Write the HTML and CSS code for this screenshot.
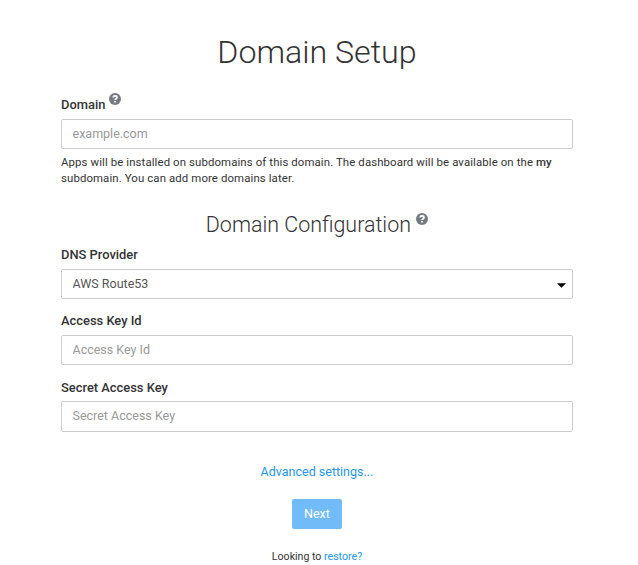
FILE: index.html
```html
<!DOCTYPE html>
<html lang="en">
<head>
<meta charset="utf-8">
<title>Domain Setup</title>
<link rel="stylesheet" href="styles.css">
</head>
<body>
<main class="setup">
  <h1>Domain Setup</h1>
  <form>
    <div class="group">
      <label for="domain">Domain <sup><svg class="help" viewBox="0 0 12 12"><circle cx="6" cy="6" r="6"/><path d="M4.1 4.5C4.2 3.3 5 2.8 6 2.8s2 .6 2 1.6C8 5.7 6.1 5.7 6.1 7.1"/><rect x="5.2" y="8" width="1.7" height="1.6"/></svg></sup></label>
      <input id="domain" type="text" placeholder="example.com">
      <p class="hint">Apps will be installed on subdomains of this domain. The dashboard will be available on the <b>my</b> subdomain. You can add more domains later.</p>
    </div>
    <h2>Domain Configuration <sup><svg class="help" viewBox="0 0 12 12"><circle cx="6" cy="6" r="6"/><path d="M4.1 4.5C4.2 3.3 5 2.8 6 2.8s2 .6 2 1.6C8 5.7 6.1 5.7 6.1 7.1"/><rect x="5.2" y="8" width="1.7" height="1.6"/></svg></sup></h2>
    <div class="group">
      <label for="provider">DNS Provider</label>
      <div class="select"><select id="provider"><option>AWS Route53</option></select><svg class="caret" viewBox="0 0 10 5"><path d="M0 0h10L5 5z"/></svg></div>
    </div>
    <div class="group">
      <label for="key">Access Key Id</label>
      <input id="key" type="text" placeholder="Access Key Id">
    </div>
    <div class="group last">
      <label for="secret">Secret Access Key</label>
      <input id="secret" type="text" placeholder="Secret Access Key">
    </div>
    <div class="actions">
      <a class="advanced" href="#">Advanced settings...</a>
      <button type="button">Next</button>
      <p class="restore">Looking to <a href="#">restore?</a></p>
    </div>
  </form>
</main>
</body>
</html>
```

FILE: styles.css
```css
* { box-sizing: border-box; }
body { margin: 0; background: #fff; color: #333; font: 12.5px/20px Roboto, "Liberation Sans", sans-serif; overflow: hidden; }
.setup { width: 512px; margin: 0 0 0 61px; padding-top: 34px; }
h1 { margin: 0 0 25px; font-size: 32.2px; line-height: 36px; font-weight: 300; text-align: center; }
h2 { margin: 27px 0 8px; font-size: 21.45px; line-height: 24px; font-weight: 300; text-align: center; }
label { display: block; height: 20px; margin-bottom: 4px; font-size: 12.9px; font-weight: 500; }
sup { font-size: 75%; line-height: 0; position: relative; top: -0.5em; vertical-align: baseline; }
.help { width: 12px; height: 12px; fill: #757b80; position: relative; top: 1px; }
.help path { fill: none; stroke: #fff; stroke-width: 1.7; }
.help rect { fill: #fff; }
input, select { display: block; width: 100%; height: 30px; padding: 3px 11px 5px 10.5px; border: 1px solid #ccc; border-radius: 2px; background: #fff; color: #555; font: inherit; outline: 0; appearance: none; }
select { padding-top: 4px; padding-bottom: 4px; }
input::placeholder { color: #999; opacity: 1; }
.hint { margin: 5px 0 0; font-size: 11.4px; letter-spacing: .11px; line-height: 16px; }
.hint b { font-weight: 500; }
.group + .group { margin-top: 12px; }
.group.last label { position: relative; top: 1px; }
.group.last input { height: 31px; }
.select { position: relative; }
.caret { position: absolute; right: 7px; top: 14px; width: 9px; height: 5px; fill: #000; }
.actions { display: flex; flex-direction: column; align-items: center; margin-top: 30px; }
a { color: #2196f3; text-decoration: none; }
button { margin: 17px 0; width: 50px; height: 30px; padding: 0; border: 0; border-radius: 2px; background: #70bbf8; color: #fff; font: inherit; }
.restore { margin: 1px 0 0; font-size: 10.6px; }
```
